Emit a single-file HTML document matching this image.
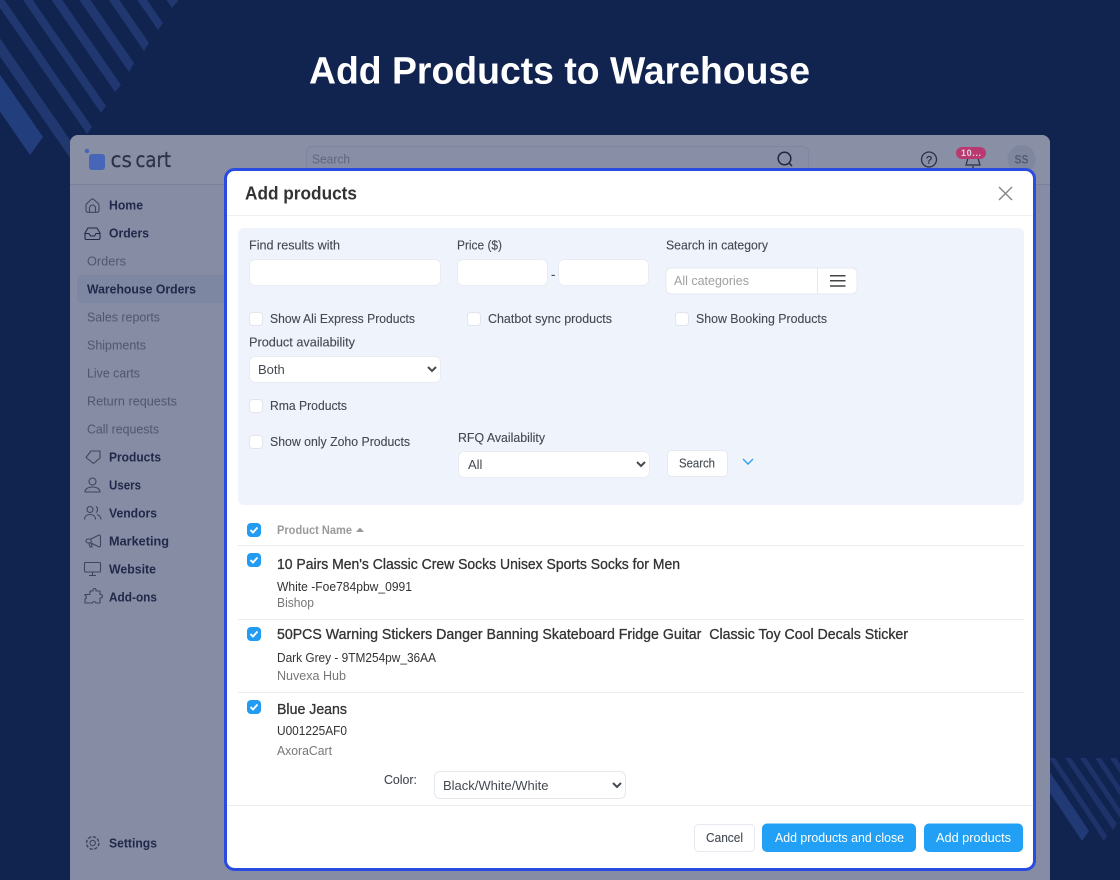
<!DOCTYPE html>
<html lang="en">
<head>
<meta charset="utf-8">
<title>Add Products to Warehouse</title>
<style>
html,body{margin:0;padding:0;width:1120px;height:880px;overflow:hidden;background:#11234f}
svg{position:absolute;left:0;top:0}
text{font-family:"Liberation Sans",sans-serif;white-space:pre}
.f{font-size:13px;fill:#444a52;stroke:#444a52;stroke-width:.12}
.b{font-size:13px;font-weight:700;fill:#20294a}
.s{font-size:13px;fill:#4f566f}
.n{font-size:14.5px;fill:#333;stroke:#333;stroke-width:.3}
.m{font-size:12.5px;fill:#333}
.g{font-size:12.5px;fill:#777}
.w{font-size:13px;fill:#fff}
.l{font-size:21px;fill:#2b3148;stroke:#2b3148;stroke-width:.2;font-family:"DejaVu Sans",sans-serif}
input,select{position:absolute;box-sizing:border-box;background:#fff;border:1px solid #e9ecf3;border-radius:6px;font:13px "Liberation Sans",sans-serif;color:#444a52;padding:0 0 0 4px;margin:0;outline:0}
</style>
</head>
<body>
<svg width="1120" height="880" viewBox="0 0 1120 880" xmlns="http://www.w3.org/2000/svg">
<rect width="1120" height="880" fill="#11234f"/>
<g fill="#20376f">
<polygon points="172,8 178,1 -22,-289 -28,-282"/>
<polygon points="158,30 163,23 -37,-267 -42,-260"/>
<polygon points="144,51 149,43 -51,-247 -56,-239"/>
<polygon points="129,72 134,63 -66,-227 -71,-218"/>
<polygon points="115,92 121,85 -79,-205 -85,-198"/>
<polygon points="101,113 106,106 -94,-184 -99,-177"/>
<polygon points="87,134 92,127 -108,-163 -113,-156"/>
<polygon points="70,158 77,150 -123,-140 -130,-132"/>
<polygon points="30,155 43,137 -157,-153 -170,-135" fill="#233e7c"/>
</g>
<svg x="1050" y="758" width="70" height="100">
<g fill="#1d3369">
<polygon points="54,83 57,78 5,0 -1,0"/>
<polygon points="63,72 67,66 21,0 15,0"/>
<polygon points="30,0 36,0 96,90 90,90"/>
<polygon points="45,0 51,0 111,90 105,90"/>
<polygon points="60,0 66,0 126,90 120,90"/>
<polygon points="32,83 39,73 -1,13 -8,23" fill="#213a76"/>
</g>
</svg>
<path d="M78 135H1042a8 8 0 0 1 8 8V880H70V143a8 8 0 0 1 8-8z" fill="#858ca3"/>
<path d="M78 135H1042a8 8 0 0 1 8 8V184H70V143a8 8 0 0 1 8-8z" fill="#898fa5"/>
<path d="M70 184.500H1050" stroke="#7a8198"/>
<rect x="77" y="275" width="150" height="28" rx="5" fill="#7e87a2"/>
<circle cx="87" cy="151" r="2.200" fill="#4766b8"/>
<rect x="89" y="154" width="16" height="16" rx="3" fill="#4766b8"/>
<text class="l" x="110.500" y="167" textLength="21.500" lengthAdjust="spacingAndGlyphs">cs</text>
<text class="l" x="135.500" y="167" textLength="35.500" lengthAdjust="spacingAndGlyphs">cart</text>
<rect x="306.500" y="146.500" width="502" height="30" rx="5" fill="#878ea5" stroke="#7f869d"/>
<text x="312" y="163.500" font-size="13" fill="#5f667f" textLength="38" lengthAdjust="spacingAndGlyphs">Search</text>
<circle cx="784.500" cy="158.500" r="6.300" fill="none" stroke="#20263c" stroke-width="1.500"/>
<path d="M789 163l3 3" stroke="#20263c" stroke-width="1.500"/>
<circle cx="929" cy="159.500" r="7.500" fill="none" stroke="#2a3047" stroke-width="1.300"/>
<text x="926" y="163.500" font-size="11" fill="#2a3047" stroke="#2a3047" stroke-width=".3">?</text>
<path d="M966 165l2-7h10l2 7zM972 167h2" fill="none" stroke="#2a3047" stroke-width="1.200"/>
<rect x="956" y="147" width="30" height="12" rx="6" fill="#b83a70"/>
<text x="961" y="156" font-size="9" font-weight="700" fill="#e8d3de" textLength="20">10...</text>
<circle cx="1021.500" cy="159" r="14" fill="#7f879e"/>
<text x="1014.500" y="163.500" font-size="12" font-weight="700" fill="#535b76" textLength="14" lengthAdjust="spacingAndGlyphs">SS</text>

<g fill="none" stroke="#3e465f" stroke-width="1.100" stroke-linejoin="round">
<path d="M86 205.500c0-1 .5-1.800 1.200-2.400l4-3.600a2 2 0 0 1 2.600 0l4 3.600c.7.600 1.200 1.400 1.200 2.400v5a1.800 1.800 0 0 1-1.800 1.800H87.800a1.800 1.800 0 0 1-1.800-1.800zM89.500 212.300v-4.300a3 3 0 0 1 6 0v4.300"/>
<path d="M85 233l3-5h9l3 5v5a1.500 1.500 0 0 1-1.500 1.500h-12A1.500 1.500 0 0 1 85 238zM85 233.500h4l1.500 2.500h4l1.500-2.500h4" stroke="#20294a"/>
<path d="M91 451h9v7l-6.500 5.500-7.500-6z"/>
<path d="M89 481.500a3.500 3.500 0 1 0 7 0a3.500 3.500 0 1 0-7 0zM85 492c0-3 3-5 7.500-5s7.500 2 7.500 5z"/>
<path d="M87 509.500a3 3 0 1 0 6 0a3 3 0 1 0-6 0zM84.500 519.500c0-3 2-5 5.500-5s5.500 2 5.500 5M96 506.500c2 1 2 5 0 6M97 514.500c2 .5 4 2.500 4 5"/>
<path d="M91 539l7-3.500a1.500 1.500 0 0 1 2.500 1.300v8.400a1.500 1.500 0 0 1-2.500 1.300L91 543H88a2 2 0 0 1 0-4zM91 539v4M89 543l1 4h2l-.5-3.500"/>
<path d="M85.500 562.500h14a1 1 0 0 1 1 1v7.500a1 1 0 0 1-1 1h-14a1 1 0 0 1-1-1v-7.500a1 1 0 0 1 1-1zM92.500 572.500v3M89 575.500h7"/>
<path d="M90 591h3v-1a1.500 1.500 0 0 1 3 0v1h4v3.500h1a1.800 1.800 0 0 1 0 3.500h-1v5h-4a1.800 1.800 0 0 0-3.500 0H85v-4a1.800 1.800 0 0 0 0-3.500V594.500h5z"/>
<circle cx="92.700" cy="843" r="2.700"/><circle cx="92.700" cy="843" r="6.200" stroke-dasharray="3.200 1.660" stroke-width="1.500"/>
</g>
<text class="b" x="109" y="209.500" textLength="34" lengthAdjust="spacingAndGlyphs">Home</text>
<text class="b" x="109" y="237.500" textLength="40" lengthAdjust="spacingAndGlyphs">Orders</text>
<text class="s" x="87" y="265.500" textLength="39" lengthAdjust="spacingAndGlyphs">Orders</text>
<text class="b" x="87" y="293.500" textLength="109" lengthAdjust="spacingAndGlyphs">Warehouse Orders</text>
<text class="s" x="87" y="321.500" textLength="73" lengthAdjust="spacingAndGlyphs">Sales reports</text>
<text class="s" x="87" y="349.500" textLength="59" lengthAdjust="spacingAndGlyphs">Shipments</text>
<text class="s" x="87" y="377.500" textLength="53" lengthAdjust="spacingAndGlyphs">Live carts</text>
<text class="s" x="87" y="405.500" textLength="90" lengthAdjust="spacingAndGlyphs">Return requests</text>
<text class="s" x="87" y="433.500" textLength="72" lengthAdjust="spacingAndGlyphs">Call requests</text>
<text class="b" x="109" y="461.500" textLength="52" lengthAdjust="spacingAndGlyphs">Products</text>
<text class="b" x="109" y="489.500" textLength="32" lengthAdjust="spacingAndGlyphs">Users</text>
<text class="b" x="109" y="517.500" textLength="48" lengthAdjust="spacingAndGlyphs">Vendors</text>
<text class="b" x="109" y="545.500" textLength="60" lengthAdjust="spacingAndGlyphs">Marketing</text>
<text class="b" x="109" y="573.500" textLength="47" lengthAdjust="spacingAndGlyphs">Website</text>
<text class="b" x="109" y="601.500" textLength="48" lengthAdjust="spacingAndGlyphs">Add-ons</text>
<text class="b" x="109" y="847.500" textLength="48" lengthAdjust="spacingAndGlyphs">Settings</text>

<text x="309" y="83.500" font-size="38" font-weight="700" fill="#fff" textLength="501" lengthAdjust="spacingAndGlyphs">Add Products to Warehouse</text>

<rect x="225.500" y="169.500" width="809" height="700" rx="9" fill="#fff" stroke="#2a4be0" stroke-width="3"/>
<path d="M227 215.500H1033" stroke="#eef0f4"/>
<text x="245" y="199.500" font-size="18" font-weight="700" fill="#333" textLength="112" lengthAdjust="spacingAndGlyphs">Add products</text>
<path d="M999 187l13 13M1012 187l-13 13" stroke="#888" stroke-width="1.500" fill="none"/>

<rect x="238" y="228" width="786" height="277" rx="6" fill="#eff3fb"/>
<text class="f" x="249" y="249.500" textLength="91" lengthAdjust="spacingAndGlyphs">Find results with</text>
<text class="f" x="457" y="249.500" textLength="45" lengthAdjust="spacingAndGlyphs">Price ($)</text>
<text class="f" x="666" y="249.500" textLength="102" lengthAdjust="spacingAndGlyphs">Search in category</text>
<text class="f" x="551" y="279">-</text>
<rect x="666" y="268" width="191" height="26" rx="5" fill="#fff" stroke="#e6e9f0"/>
<path d="M817.500 268v26" stroke="#e6e9f0"/>
<text x="674" y="285" font-size="13" fill="#a0a0a0" textLength="75" lengthAdjust="spacingAndGlyphs">All categories</text>
<path d="M830 275.700h15.500M830 280.700h15.500M830 286h15.500" stroke="#444" stroke-width="1.500"/>

<g fill="#fff" stroke="#e2e5ec">
<rect x="249.500" y="312.500" width="13" height="13" rx="3"/>
<rect x="467.500" y="312.500" width="13" height="13" rx="3"/>
<rect x="675.500" y="312.500" width="13" height="13" rx="3"/>
<rect x="249.500" y="399.500" width="13" height="13" rx="3"/>
<rect x="249.500" y="435.500" width="13" height="13" rx="3"/>
</g>
<text class="f" x="270" y="323" textLength="145" lengthAdjust="spacingAndGlyphs">Show Ali Express Products</text>
<text class="f" x="488" y="323" textLength="124" lengthAdjust="spacingAndGlyphs">Chatbot sync products</text>
<text class="f" x="696" y="323" textLength="131" lengthAdjust="spacingAndGlyphs">Show Booking Products</text>
<text class="f" x="249" y="346.500" textLength="106" lengthAdjust="spacingAndGlyphs">Product availability</text>
<text class="f" x="270" y="410" textLength="77" lengthAdjust="spacingAndGlyphs">Rma Products</text>
<text class="f" x="270" y="446" textLength="140" lengthAdjust="spacingAndGlyphs">Show only Zoho Products</text>
<text class="f" x="458" y="442" textLength="87" lengthAdjust="spacingAndGlyphs">RFQ Availability</text>
<rect x="667.500" y="450.500" width="60" height="26" rx="4" fill="#fff" stroke="#e6e9f0"/>
<text class="f" x="679" y="467.500" textLength="36" lengthAdjust="spacingAndGlyphs">Search</text>
<path d="M743 459l5 5 5-5" fill="none" stroke="#2f9fee" stroke-width="1.400"/>

<g stroke="#e9ecf1">
<path d="M238 545.500H1024M238 619.500H1024M238 692.500H1024M227 805.500H1033"/>
</g>
<g fill="#229bf2">
<rect x="247" y="523" width="14" height="14" rx="4"/>
<rect x="247" y="553" width="14" height="14" rx="4"/>
<rect x="247" y="627" width="14" height="14" rx="4"/>
<rect x="247" y="700" width="14" height="14" rx="4"/>
</g>
<g fill="none" stroke="#fff" stroke-width="1.900">
<path d="M250.500 530l2.500 2.500 4.500-5"/>
<path d="M250.500 560l2.500 2.500 4.500-5"/>
<path d="M250.500 634l2.500 2.500 4.500-5"/>
<path d="M250.500 707l2.500 2.500 4.500-5"/>
</g>
<text x="277" y="534" font-size="11.500" font-weight="700" fill="#9a9a9a" textLength="75" lengthAdjust="spacingAndGlyphs">Product Name</text>
<path d="M356 532l4-4.500 4 4.500z" fill="#9a9a9a"/>
<text class="n" x="277" y="569" textLength="403" lengthAdjust="spacingAndGlyphs">10 Pairs Men's Classic Crew Socks Unisex Sports Socks for Men</text>
<text class="m" x="277" y="591" textLength="135" lengthAdjust="spacingAndGlyphs">White -Foe784pbw_0991</text>
<text class="g" x="277" y="607" textLength="37" lengthAdjust="spacingAndGlyphs">Bishop</text>
<text class="n" x="277" y="639" textLength="631" lengthAdjust="spacingAndGlyphs">50PCS Warning Stickers Danger Banning Skateboard Fridge Guitar  Classic Toy Cool Decals Sticker</text>
<text class="m" x="277" y="662" textLength="159" lengthAdjust="spacingAndGlyphs">Dark Grey - 9TM254pw_36AA</text>
<text class="g" x="277" y="680" textLength="69" lengthAdjust="spacingAndGlyphs">Nuvexa Hub</text>
<text class="n" x="277" y="714" textLength="70" lengthAdjust="spacingAndGlyphs">Blue Jeans</text>
<text class="m" x="277" y="735" textLength="70" lengthAdjust="spacingAndGlyphs">U001225AF0</text>
<text class="g" x="277" y="755" textLength="55" lengthAdjust="spacingAndGlyphs">AxoraCart</text>
<text class="f" x="384" y="784" textLength="33" lengthAdjust="spacingAndGlyphs">Color:</text>

<rect x="694.500" y="824.500" width="60" height="27" rx="4" fill="#fff" stroke="#e6e9f0"/>
<text class="f" x="706" y="842" textLength="37" lengthAdjust="spacingAndGlyphs">Cancel</text>
<rect x="762" y="823.500" width="154" height="28.500" rx="5" fill="#21a0f6"/>
<text class="w" x="775" y="842" textLength="129" lengthAdjust="spacingAndGlyphs">Add products and close</text>
<rect x="924" y="823.500" width="99" height="28.500" rx="5" fill="#21a0f6"/>
<text class="w" x="936" y="842" textLength="75" lengthAdjust="spacingAndGlyphs">Add products</text>
</svg>

<input type="text" style="left:249px;top:259px;width:192px;height:27px">
<input type="text" style="left:457px;top:259px;width:91px;height:27px">
<input type="text" style="left:558px;top:259px;width:91px;height:27px">
<select style="left:249px;top:356px;width:192px;height:27px"><option>Both</option></select>
<select style="left:458px;top:451px;width:192px;height:27px;padding-left:5px"><option>All</option></select>
<select style="left:434px;top:771px;width:192px;height:28px;border-color:#e6e8ee"><option>Black/White/White</option></select>
</body>
</html>
